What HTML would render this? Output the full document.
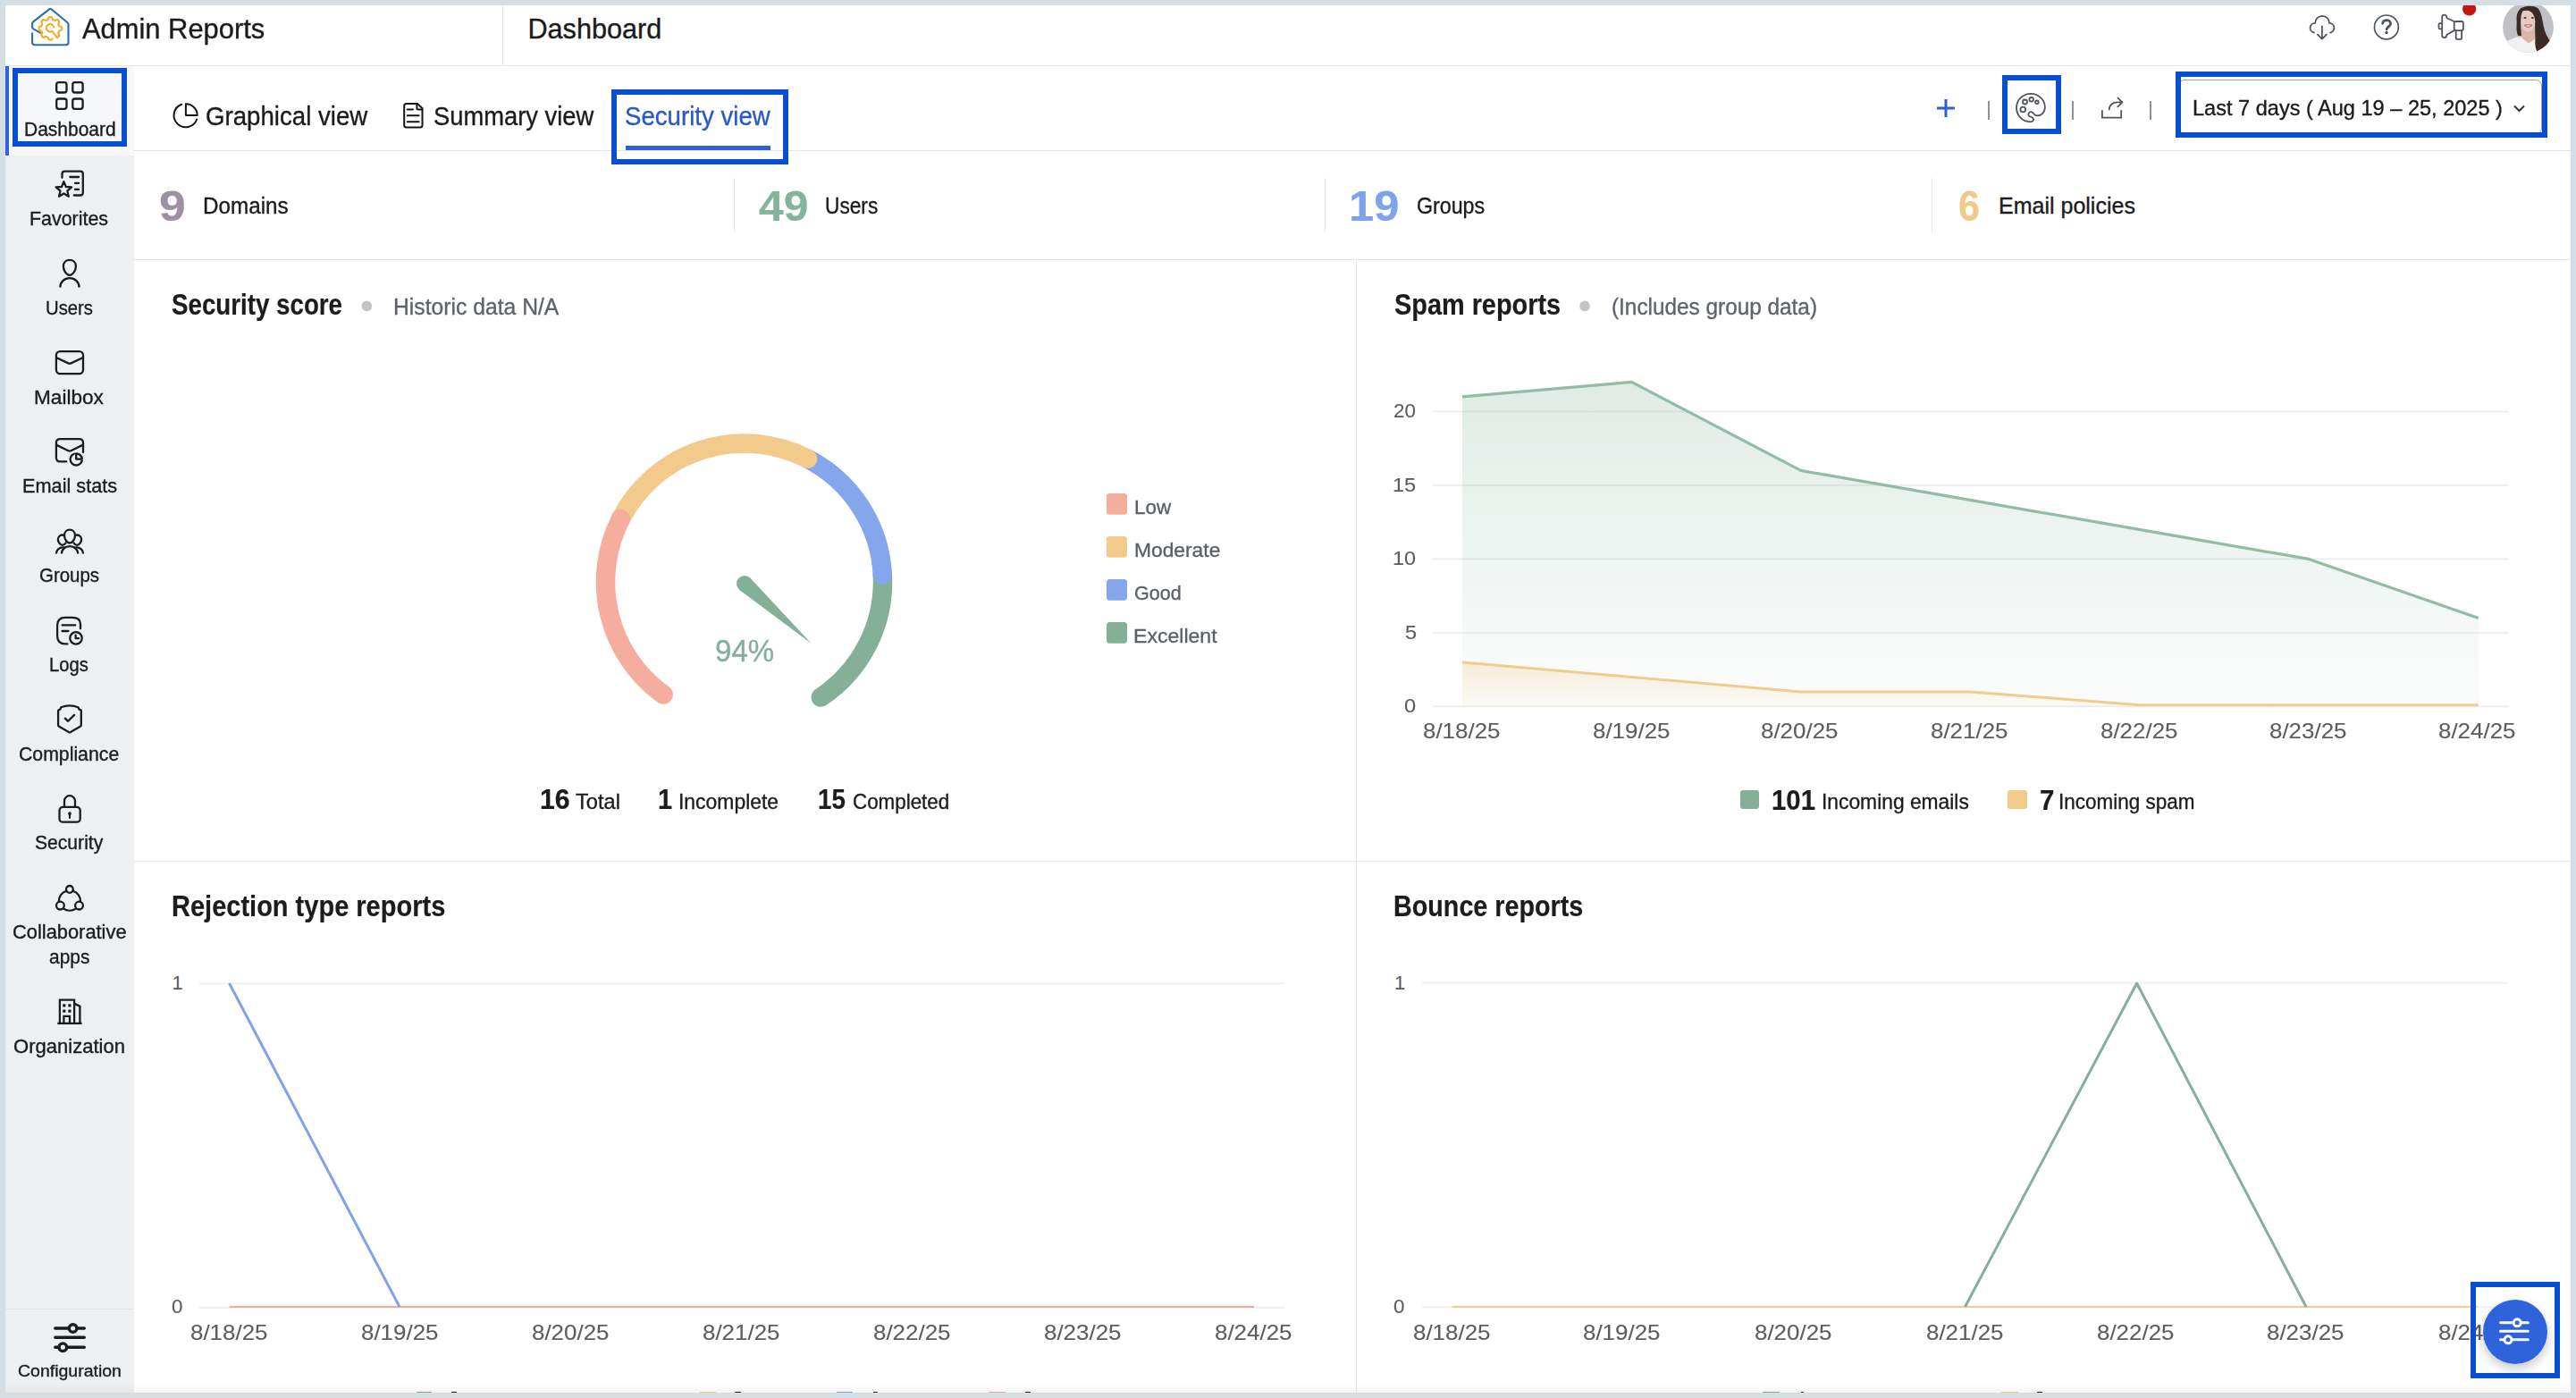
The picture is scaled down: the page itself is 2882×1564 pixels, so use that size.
<!DOCTYPE html>
<html><head><meta charset="utf-8"><title>Admin Reports</title>
<style>
html,body{margin:0;padding:0}
body{width:2882px;height:1564px;position:relative;overflow:hidden;background:#d6dee5;font-family:"Liberation Sans",sans-serif}
.t{position:absolute;white-space:pre;transform-origin:0 0}
.b{position:absolute}
.ann{position:absolute;border:6px solid #0650d0;box-sizing:border-box}
svg{position:absolute;left:0;top:0}
</style></head><body>
<div class="b" style="left:6px;top:6px;width:2870px;height:1552px;background:#fff"></div>
<div class="b" style="left:6px;top:73px;width:2870px;height:1px;background:#e3e5e8"></div>
<div class="b" style="left:562px;top:6px;width:1px;height:67px;background:#e6e8eb"></div>
<div class="b" style="left:6px;top:74px;width:144px;height:1484px;background:#eeeff1"></div>
<div class="b" style="left:10px;top:74px;width:140px;height:100px;background:#f6f7f9"></div>
<div class="b" style="left:6px;top:74px;width:4px;height:100px;background:#2f62dc"></div>
<div class="b" style="left:6px;top:1464px;width:144px;height:1px;background:#e1e3e6"></div>
<div class="b" style="left:150px;top:168px;width:2726px;height:1px;background:#e3e5e8"></div>
<div class="b" style="left:150px;top:290px;width:2726px;height:1px;background:#e6e8eb"></div>
<div class="b" style="left:150px;top:963px;width:2726px;height:1px;background:#e6e8eb"></div>
<div class="b" style="left:1517px;top:291px;width:1px;height:1267px;background:#e6e8eb"></div>
<div class="b" style="left:820.5px;top:199px;width:1px;height:61px;background:#e6e8eb"></div>
<div class="b" style="left:1482px;top:199px;width:1px;height:61px;background:#e6e8eb"></div>
<div class="b" style="left:2160.5px;top:199px;width:1px;height:61px;background:#e6e8eb"></div>
<div class="b" style="left:700px;top:163px;width:162px;height:5px;background:#2e5fd6"></div>
<div class="b" style="left:2224px;top:113px;width:2px;height:21px;background:#8e9196"></div>
<div class="b" style="left:2318px;top:113px;width:2px;height:21px;background:#8e9196"></div>
<div class="b" style="left:2405px;top:113px;width:2px;height:21px;background:#8e9196"></div>
<div class="b" style="left:2437px;top:89px;width:406.5px;height:62px;border:1.5px solid #9da0a5;border-radius:7px;box-sizing:border-box"></div>
<svg width="2882" height="1564" viewBox="0 0 2882 1564">
<defs>
<linearGradient id="gg" x1="0" y1="426" x2="0" y2="790.4" gradientUnits="userSpaceOnUse"><stop offset="0" stop-color="#84b09a" stop-opacity="0.25"/><stop offset="1" stop-color="#84b09a" stop-opacity="0.03"/></linearGradient>
<linearGradient id="gy" x1="0" y1="740" x2="0" y2="790.4" gradientUnits="userSpaceOnUse"><stop offset="0" stop-color="#f2ca8c" stop-opacity="0.28"/><stop offset="1" stop-color="#f2ca8c" stop-opacity="0.05"/></linearGradient>
<filter id="sh" x="-50%" y="-50%" width="200%" height="200%"><feDropShadow dx="0" dy="5" stdDeviation="6" flood-color="#000" flood-opacity="0.22"/></filter>
</defs>
<path d="M987.29 642.89 A155 155 0 0 1 918.28 780.10" stroke="#84b09a" stroke-width="21.5" fill="none" stroke-linecap="round"/><path d="M903.59 513.26 A155 155 0 0 1 987.29 642.89" stroke="#85a6ea" stroke-width="21.5" fill="none" stroke-linecap="round"/><path d="M694.39 580.63 A155 155 0 0 1 903.59 513.26" stroke="#f2ca8c" stroke-width="21.5" fill="none" stroke-linecap="round"/><path d="M742.27 777.03 A155 155 0 0 1 694.39 580.63" stroke="#f5ae9d" stroke-width="21.5" fill="none" stroke-linecap="round"/><circle cx="833" cy="653" r="9" fill="#84b09a"/><path d="M827.00 659.70 L907.8 720 L839.00 646.30Z" fill="#84b09a"/><line x1="1602.8" y1="790.4" x2="2806.7" y2="790.4" stroke="#ededed" stroke-width="1.6"/><line x1="1602.8" y1="707.9" x2="2806.7" y2="707.9" stroke="#ededed" stroke-width="1.6"/><line x1="1602.8" y1="625.4" x2="2806.7" y2="625.4" stroke="#ededed" stroke-width="1.6"/><line x1="1602.8" y1="542.9" x2="2806.7" y2="542.9" stroke="#ededed" stroke-width="1.6"/><line x1="1602.8" y1="460.4" x2="2806.7" y2="460.4" stroke="#ededed" stroke-width="1.6"/>
<polygon points="1636,790.4 1636.0,443.9 1825.4,427.4 2014.7,526.4 2204.0,559.4 2393.4,592.4 2583.0,625.4 2772.9,691.4 2772.9,790.4" fill="url(#gg)"/>
<polygon points="1636,790.4 1636.0,740.9 1825.4,757.4 2014.7,773.9 2204.0,773.9 2393.4,790.4 2583.0,790.4 2772.9,790.4 2772.9,790.4" fill="url(#gy)"/>
<polyline points="1636.0,443.9 1825.4,427.4 2014.7,526.4 2204.0,559.4 2393.4,592.4 2583.0,625.4 2772.9,691.4" fill="none" stroke="#90bda4" stroke-width="3.2" stroke-linejoin="round"/>
<polyline points="1636.0,740.9 1825.4,757.4 2014.7,773.9 2204.0,773.9 2393.4,788.8 2583.0,788.8 2772.9,788.8" fill="none" stroke="#f3cb8f" stroke-width="3" stroke-linejoin="round"/>
<line x1="223" y1="1100.2" x2="1437" y2="1100.2" stroke="#ededed" stroke-width="1.6"/>
<line x1="223" y1="1462.9" x2="1437" y2="1462.9" stroke="#ededed" stroke-width="1.6"/>
<line x1="256.7" y1="1462" x2="1403" y2="1462" stroke="#f3ab98" stroke-width="2.2"/>
<polyline points="256.5,1100 447,1462" fill="none" stroke="#7fa3e9" stroke-width="3"/><line x1="1591" y1="1099.8" x2="2806" y2="1099.8" stroke="#ededed" stroke-width="1.6"/>
<line x1="1591" y1="1462.5" x2="2806" y2="1462.5" stroke="#ededed" stroke-width="1.6"/>
<line x1="1624.5" y1="1462" x2="2771.5" y2="1462" stroke="#f3cb8f" stroke-width="2.2"/>
<polyline points="2198.5,1462 2390.6,1100 2580,1462" fill="none" stroke="#84b09a" stroke-width="3" stroke-linejoin="round"/>
<g stroke="#1b1c1e" stroke-width="2.3" fill="none" stroke-linecap="round" stroke-linejoin="round">
 <rect x="63.2" y="92.2" width="11.3" height="11.3" rx="2.5"/><rect x="81.3" y="92.2" width="11.3" height="11.3" rx="2.5"/>
 <rect x="63.2" y="110.5" width="11.3" height="11.3" rx="2.5"/><rect x="81.3" y="110.5" width="11.3" height="11.3" rx="2.5"/>
 <path d="M69.5 198.8V194.6Q69.5 191.6 72.5 191.6H89.8Q92.8 191.6 92.8 194.6V215.5Q92.8 218.5 89.8 218.5H82.8"/>
 <path d="M78.4 198H88.1M84 204.9H88.1M84 211.9H88.1"/>
 <path d="M71.40,203.10 L68.99,208.98 L62.65,209.46 L67.50,213.57 L65.99,219.74 L71.40,216.40 L76.81,219.74 L75.30,213.57 L80.15,209.46 L73.81,208.98Z"/>
 <path d="M77.9 290.9C82 290.9 84.9 293.9 84.9 298C84.9 302.6 81.4 307.8 77.9 307.8C74.4 307.8 70.9 302.6 70.9 298C70.9 293.9 73.8 290.9 77.9 290.9Z"/>
 <path d="M67.3 321.5C67.3 315.6 72 311.2 77.9 311.2C83.8 311.2 88.6 315.6 88.6 321.5" stroke-linecap="butt"/>
 <rect x="62.9" y="393.1" width="30.1" height="25.1" rx="4.4"/>
 <path d="M63.4 400.2L76.4 406.4Q77.9 407.1 79.4 406.4L92.5 400.2"/>
 <path d="M74.3 516.4H67.3Q62.9 516.4 62.9 512V495.5Q62.9 491.1 67.3 491.1H88.6Q93 491.1 93 495.5V506"/>
 <path d="M63.4 497.9L76.4 504.2Q77.9 504.9 79.4 504.2L92.5 497.9"/>
 <path d="M82.9 507.7A6.6 6.6 0 1 0 91.7 515.3"/>
 <path d="M85.2 507.3V513.6H91.8A6.6 6.6 0 0 0 85.2 507.3Z"/>
 <path d="M78 592.6C81.6 592.6 84 595.3 84 599C84 603 81 607.5 78 607.5C75 607.5 72 603 72 599C72 595.3 74.4 592.6 78 592.6Z"/>
 <path d="M68.9 619.6C68.9 614.6 72.8 611.2 78 611.2C83.2 611.2 87.2 614.6 87.2 619.6" stroke-linecap="butt"/>
 <path d="M71.8 598.9C71.3 598.6 70.6 598.5 69.9 598.5C67 598.5 64.9 600.8 64.9 603.6C64.9 606.6 67.3 609.8 69.9 609.8C71.3 609.8 72.6 608.8 73.5 607.4"/>
 <path d="M84.2 598.9C84.7 598.6 85.4 598.5 86.1 598.5C89 598.5 91.1 600.8 91.1 603.6C91.1 606.6 88.7 609.8 86.1 609.8C84.7 609.8 83.4 608.8 82.5 607.4"/>
 <path d="M62.9 619.6C62.9 615.5 66.3 612.3 70.5 612.3C71.3 612.3 72.1 612.4 72.8 612.6M93.1 619.6C93.1 615.5 89.7 612.3 85.5 612.3C84.7 612.3 83.9 612.4 83.2 612.6" stroke-linecap="butt"/>
 <path d="M90 703.2V698Q89.8 690.8 81 690.8H73Q64.2 690.8 64.1 699.5V711.5Q64.2 720.3 73 720.4H75.4"/>
 <path d="M69.6 699.4H84.2M69.6 706H76.4"/>
 <circle cx="85" cy="713.9" r="6.7"/>
 <path d="M84.6 710.6V714.2H88"/>
 <path d="M68.3 791.3Q77.9 787.6 87.4 791.3L88.4 793.4L90.8 794.6V811.2Q90.8 812.3 89.8 812.8L78.9 819.1Q77.9 819.6 76.9 819.1L66.1 812.8Q65.1 812.3 65.1 811.2V794.7L67.4 793.4Z"/>
 <path d="M72.8 803.7L76.1 806.8L83.1 799.9"/>
 <rect x="66.5" y="902.9" width="23.2" height="16.8" rx="3.8"/>
 <path d="M72 902.6V896.2A6 6 0 0 1 84 896.2V902.6"/>
 <path d="M78 910.5V915" stroke-width="2.1"/>
 <circle cx="78" cy="910.1" r="1.9" fill="#1b1c1e" stroke="none"/>
 <circle cx="77.9" cy="994.9" r="3.9"/><circle cx="67.4" cy="1013.1" r="4.4"/><circle cx="88.5" cy="1013.1" r="4.4"/>
 <path d="M74.5 996.6A12 12 0 0 0 65.9 1008.8M70.9 1016.4A12 12 0 0 0 85 1016.4M90 1008.8A12 12 0 0 0 81.3 996.6"/>
 <path d="M64.3 1144.9H91.6" stroke-linecap="butt"/>
 <path d="M66.9 1144.9V1118.6H83.1V1144.9M83.1 1122.6L89.4 1125.8V1144.9M71.4 1144.9V1136.8H78V1144.9" stroke-linejoin="miter" stroke-linecap="butt"/>
</g>
<g fill="#1b1c1e">
 <rect x="70.2" y="1123.3" width="3.2" height="3.2" rx="0.6"/><rect x="76.3" y="1123.3" width="3.2" height="3.2" rx="0.6"/>
 <rect x="70.2" y="1129.5" width="3.2" height="3.2" rx="0.6"/><rect x="76.3" y="1129.5" width="3.2" height="3.2" rx="0.6"/>
</g>
<g stroke="#1b1c1e" stroke-width="3.4" fill="none" stroke-linecap="round">
 <path d="M61.8 1486H77.3M86 1486H94.3M61.8 1496.3H94.3M61.8 1507.2H66M74.6 1507.2H94.3"/>
 <circle cx="81.6" cy="1486" r="4.3"/><circle cx="70.3" cy="1507.2" r="4.3"/>
</g>

<g stroke="#50555c" stroke-width="1.8" fill="none" stroke-linecap="round" stroke-linejoin="round">
 <path d="M2589 36.6A5.45 5.45 0 0 1 2590.2 25.8A7.9 7.9 0 0 1 2606 25.8A5.45 5.45 0 0 1 2607 36.6"/>
 <path d="M2597.9 29.3V43.3M2592.9 38.6L2597.9 43.6L2602.9 38.6"/>
 <circle cx="2669.9" cy="30.4" r="13.4" stroke-width="1.7"/>
 <path d="M2665.6 26.3C2665.9 23.8 2667.8 22.6 2670.2 22.6C2672.8 22.6 2674.6 24.2 2674.6 26.4C2674.6 29.3 2670.1 30.3 2670.1 32.9" stroke-width="2.7"/>
 <path d="M2745.7 24L2738.6 20.7Q2737.2 20 2737.2 18.9Q2737 16.6 2734.6 16.6Q2732.2 16.6 2732.2 19V39.8Q2732.2 42.2 2734.6 42.2Q2737 42.2 2737.2 39.9Q2737.2 38.8 2738.6 38.2L2745.7 34.1"/>
 <rect x="2745.7" y="24" width="10.2" height="10.1" rx="2"/>
 <path d="M2732.2 26.2H2729.8Q2728.5 26.2 2728.5 27.5V31Q2728.5 32.3 2729.8 32.3H2732.2"/>
 <path d="M2747.7 34.1V42.2Q2747.7 43.9 2749.4 43.9H2752.4Q2754.1 43.9 2754.1 42.2V34.1"/>
</g>
<circle cx="2670" cy="36.6" r="1.75" fill="#50555c"/>
<circle cx="2762.6" cy="9.9" r="7.6" fill="#c11717"/>
<g stroke="#50555c" stroke-width="1.8" fill="none" stroke-linecap="round" stroke-linejoin="round" stroke-width="1.5">
 <path d="M2271.6 136.3C2262.6 136.3 2256 129.2 2256 120.5C2256 111.9 2263 104.9 2272 104.9C2281 104.9 2287.9 111.8 2287.9 120C2287.9 125.6 2284 129.4 2279.2 129.4C2276.7 129.4 2275.6 127.8 2274.7 126.6C2273.7 125.3 2271.9 124.9 2270.5 125.8C2269 126.8 2269 129 2270.3 129.9C2271.3 130.6 2273.5 130.8 2274.6 132.4C2275.6 134.1 2274.3 136.3 2271.6 136.3Z"/>
 <circle cx="2265.5" cy="114" r="2.5"/><circle cx="2272.7" cy="111.3" r="2.3"/><circle cx="2278.9" cy="114.3" r="1.8"/><circle cx="2263.3" cy="122.5" r="2.9"/>
</g>
<g stroke="#50555c" stroke-width="1.8" fill="none" stroke-linecap="round" stroke-linejoin="round">
 <path d="M2351.9 123.3V131.6H2373.2V123.3" stroke-linecap="butt" stroke-linejoin="miter"/>
 <path d="M2359.8 122.6C2359.8 117.5 2364 114.3 2369 114.3H2374"/>
 <path d="M2369.4 109.6L2374.4 114.3L2369.4 119.4"/>
</g>
<g stroke="#151515" stroke-width="2" fill="none" stroke-linecap="round" stroke-linejoin="round">
 <path d="M203.1 116.7A13.2 13.2 0 1 0 220.2 133.5"/>
 <path d="M207.9 116.2V129H220.7A12.8 12.8 0 0 0 207.9 116.2Z"/>
 <path d="M452.2 118.6Q452.2 116.1 454.7 116.1H467.3L472.5 121.3V140.1Q472.5 142.6 470 142.6H454.7Q452.2 142.6 452.2 140.1Z"/>
 <path d="M466.4 116.4V121Q466.4 122.5 468 122.5H472.3"/>
 <path d="M455.7 122.4H462M455.7 129.3H468.6M455.7 136.2H468.6"/>
</g>

<g stroke="#2a6cb6" stroke-width="2.1" fill="none" stroke-linecap="round" stroke-linejoin="round">
 <path d="M36.1 37.3V47.6Q36.1 50.3 38.9 50.3H73.8Q76.5 50.3 76.5 47.6V27.2Q76.5 26 75.5 25.2L57.5 10.3Q56.3 9.4 55.1 10.3L37.1 24.4Q36.1 25.2 36.1 26.4V30.6Q36.1 31.6 37 32.1L45 36.6"/>
</g>
<g stroke="#f5a91d" stroke-width="2" fill="none" stroke-linecap="round" stroke-linejoin="round">
 <path d="M58.50,43.22 L58.43,43.38 L58.37,43.54 L58.30,43.69 L58.22,43.85 L58.15,44.00 L58.07,44.15 L57.99,44.29 L57.90,44.43 L57.81,44.51 L57.70,44.52 L57.60,44.53 L57.50,44.54 L57.40,44.55 L57.29,44.56 L57.19,44.57 L57.09,44.58 L56.98,44.58 L56.88,44.59 L56.78,44.59 L56.68,44.59 L56.57,44.60 L56.47,44.60 L56.37,44.60 L56.26,44.60 L56.16,44.60 L56.06,44.60 L55.95,44.60 L55.85,44.59 L55.75,44.59 L55.64,44.58 L55.54,44.58 L55.44,44.57 L55.34,44.56 L55.23,44.56 L55.13,44.55 L55.03,44.54 L54.93,44.53 L54.82,44.51 L54.72,44.47 L54.64,44.33 L54.56,44.19 L54.48,44.04 L54.40,43.89 L54.32,43.74 L54.25,43.58 L54.18,43.42 L54.12,43.26 L54.06,43.10 L53.99,42.94 L53.94,42.78 L53.88,42.62 L53.82,42.46 L53.77,42.30 L53.72,42.15 L53.67,42.00 L53.62,41.86 L53.57,41.73 L53.49,41.71 L53.41,41.68 L53.33,41.66 L53.25,41.63 L53.17,41.61 L53.10,41.58 L53.02,41.56 L52.94,41.53 L52.86,41.50 L52.78,41.47 L52.70,41.45 L52.63,41.42 L52.55,41.39 L52.47,41.35 L52.40,41.32 L52.32,41.29 L52.24,41.26 L52.17,41.23 L52.09,41.19 L52.02,41.16 L51.94,41.12 L51.87,41.09 L51.79,41.05 L51.72,41.01 L51.65,40.98 L51.57,40.94 L51.50,40.90 L51.43,40.86 L51.35,40.82 L51.28,40.78 L51.15,40.83 L51.02,40.90 L50.88,40.97 L50.73,41.04 L50.58,41.12 L50.43,41.19 L50.28,41.26 L50.12,41.34 L49.97,41.41 L49.81,41.48 L49.65,41.54 L49.49,41.61 L49.33,41.67 L49.16,41.72 L49.00,41.78 L48.84,41.82 L48.68,41.87 L48.53,41.90 L48.43,41.86 L48.34,41.80 L48.26,41.73 L48.19,41.67 L48.11,41.60 L48.03,41.54 L47.95,41.47 L47.87,41.40 L47.80,41.33 L47.72,41.26 L47.64,41.19 L47.57,41.12 L47.49,41.05 L47.42,40.98 L47.35,40.91 L47.27,40.83 L47.20,40.76 L47.13,40.69 L47.06,40.61 L46.99,40.54 L46.92,40.46 L46.85,40.38 L46.78,40.31 L46.71,40.23 L46.64,40.15 L46.58,40.07 L46.51,39.99 L46.45,39.91 L46.38,39.83 L46.32,39.75 L46.31,39.63 L46.34,39.47 L46.39,39.31 L46.44,39.15 L46.49,38.99 L46.55,38.83 L46.61,38.67 L46.67,38.51 L46.74,38.35 L46.81,38.19 L46.88,38.03 L46.96,37.88 L47.03,37.72 L47.10,37.57 L47.18,37.43 L47.25,37.28 L47.32,37.14 L47.39,37.01 L47.41,36.90 L47.37,36.83 L47.33,36.75 L47.29,36.68 L47.25,36.61 L47.21,36.53 L47.18,36.46 L47.14,36.39 L47.10,36.31 L47.07,36.24 L47.03,36.16 L47.00,36.09 L46.96,36.01 L46.93,35.93 L46.90,35.86 L46.87,35.78 L46.84,35.70 L46.81,35.63 L46.78,35.55 L46.75,35.47 L46.72,35.40 L46.69,35.32 L46.66,35.24 L46.64,35.16 L46.61,35.08 L46.58,35.00 L46.56,34.92 L46.53,34.85 L46.51,34.77 L46.49,34.69 L46.45,34.61 L46.30,34.56 L46.16,34.52 L46.01,34.47 L45.85,34.41 L45.70,34.36 L45.54,34.31 L45.38,34.25 L45.21,34.19 L45.05,34.13 L44.89,34.06 L44.73,34.00 L44.57,33.93 L44.42,33.85 L44.26,33.78 L44.11,33.70 L43.97,33.62 L43.83,33.54 L43.70,33.45 L43.68,33.35 L43.67,33.25 L43.66,33.14 L43.65,33.04 L43.64,32.94 L43.63,32.84 L43.63,32.73 L43.62,32.63 L43.62,32.53 L43.61,32.42 L43.61,32.32 L43.60,32.22 L43.60,32.11 L43.60,32.01 L43.60,31.91 L43.60,31.80 L43.60,31.70 L43.60,31.60 L43.61,31.50 L43.61,31.39 L43.61,31.29 L43.62,31.19 L43.63,31.08 L43.63,30.98 L43.64,30.88 L43.65,30.77 L43.66,30.67 L43.67,30.57 L43.68,30.47 L43.69,30.36 L43.81,30.28 L43.95,30.19 L44.09,30.11 L44.24,30.03 L44.39,29.96 L44.55,29.88 L44.71,29.81 L44.87,29.75 L45.03,29.68 L45.19,29.62 L45.35,29.56 L45.51,29.50 L45.67,29.45 L45.83,29.39 L45.98,29.34 L46.13,29.29 L46.28,29.24 L46.42,29.19 L46.48,29.13 L46.51,29.05 L46.53,28.97 L46.56,28.89 L46.58,28.81 L46.61,28.73 L46.63,28.65 L46.66,28.57 L46.69,28.49 L46.71,28.42 L46.74,28.34 L46.77,28.26 L46.80,28.18 L46.83,28.11 L46.86,28.03 L46.89,27.95 L46.93,27.88 L46.96,27.80 L46.99,27.73 L47.03,27.65 L47.06,27.57 L47.10,27.50 L47.13,27.43 L47.17,27.35 L47.21,27.28 L47.25,27.20 L47.28,27.13 L47.32,27.06 L47.36,26.98 L47.40,26.91 L47.40,26.81 L47.33,26.68 L47.26,26.54 L47.19,26.39 L47.11,26.25 L47.04,26.10 L46.97,25.95 L46.89,25.79 L46.82,25.64 L46.75,25.48 L46.68,25.32 L46.62,25.16 L46.56,25.00 L46.50,24.83 L46.44,24.67 L46.40,24.51 L46.35,24.35 L46.31,24.19 L46.31,24.06 L46.37,23.98 L46.44,23.90 L46.50,23.82 L46.57,23.74 L46.63,23.66 L46.70,23.58 L46.77,23.51 L46.84,23.43 L46.91,23.35 L46.98,23.28 L47.05,23.20 L47.12,23.13 L47.19,23.05 L47.26,22.98 L47.33,22.90 L47.41,22.83 L47.48,22.76 L47.56,22.69 L47.63,22.62 L47.71,22.55 L47.78,22.48 L47.86,22.41 L47.94,22.34 L48.02,22.27 L48.09,22.21 L48.17,22.14 L48.25,22.07 L48.33,22.01 L48.41,21.95 L48.50,21.89 L48.66,21.93 L48.82,21.97 L48.98,22.02 L49.14,22.07 L49.30,22.12 L49.46,22.18 L49.62,22.25 L49.78,22.31 L49.94,22.38 L50.10,22.45 L50.26,22.52 L50.41,22.60 L50.56,22.67 L50.71,22.74 L50.85,22.82 L51.00,22.89 L51.13,22.96 L51.27,23.02 L51.34,22.99 L51.41,22.95 L51.49,22.91 L51.56,22.87 L51.63,22.83 L51.71,22.79 L51.78,22.76 L51.86,22.72 L51.93,22.68 L52.01,22.65 L52.08,22.61 L52.16,22.58 L52.23,22.55 L52.31,22.51 L52.39,22.48 L52.46,22.45 L52.54,22.42 L52.62,22.39 L52.69,22.36 L52.77,22.33 L52.85,22.30 L52.93,22.27 L53.00,22.25 L53.08,22.22 L53.16,22.19 L53.24,22.17 L53.32,22.14 L53.40,22.12 L53.48,22.10 L53.56,22.08 L53.61,21.97 L53.66,21.82 L53.71,21.67 L53.76,21.52 L53.82,21.36 L53.87,21.21 L53.93,21.05 L53.99,20.88 L54.05,20.72 L54.11,20.56 L54.17,20.40 L54.24,20.24 L54.31,20.08 L54.39,19.93 L54.46,19.78 L54.54,19.63 L54.63,19.49 L54.71,19.35 L54.81,19.29 L54.91,19.28 L55.01,19.27 L55.11,19.26 L55.22,19.25 L55.32,19.24 L55.42,19.23 L55.53,19.22 L55.63,19.22 L55.73,19.21 L55.84,19.21 L55.94,19.21 L56.04,19.20 L56.14,19.20 L56.25,19.20 L56.35,19.20 L56.45,19.20 L56.56,19.20 L56.66,19.21 L56.76,19.21 L56.87,19.21 L56.97,19.22 L57.07,19.22 L57.18,19.23 L57.28,19.24 L57.38,19.25 L57.48,19.26 L57.59,19.27 L57.69,19.28 L57.79,19.29 L57.89,19.35 L57.97,19.48 L58.06,19.63 L58.13,19.78 L58.21,19.93 L58.29,20.08 L58.36,20.24 L58.42,20.40 L58.49,20.56 L58.55,20.72 L58.61,20.88 L58.67,21.04 L58.73,21.20 L58.78,21.36 L58.84,21.52 L58.89,21.67 L58.94,21.82 L58.98,21.96 L59.04,22.07 L59.12,22.10 L59.20,22.12 L59.28,22.14 L59.36,22.17 L59.44,22.19 L59.52,22.22 L59.59,22.25 L59.67,22.27 L59.75,22.30 L59.83,22.33 L59.91,22.36 L59.98,22.39 L60.06,22.42 L60.14,22.45 L60.21,22.48 L60.29,22.51 L60.37,22.55 L60.44,22.58 L60.52,22.61 L60.59,22.65 L60.67,22.68 L60.74,22.72 L60.82,22.75 L60.89,22.79 L60.96,22.83 L61.04,22.87 L61.11,22.91 L61.18,22.95 L61.26,22.99 L61.33,23.02 L61.46,22.96 L61.60,22.89 L61.74,22.82 L61.89,22.75 L62.04,22.67 L62.19,22.60 L62.34,22.53 L62.50,22.45 L62.65,22.38 L62.81,22.31 L62.97,22.25 L63.13,22.18 L63.30,22.12 L63.46,22.07 L63.62,22.02 L63.78,21.97 L63.94,21.93 L64.10,21.89 L64.19,21.94 L64.27,22.01 L64.35,22.07 L64.43,22.14 L64.50,22.21 L64.58,22.27 L64.66,22.34 L64.74,22.41 L64.82,22.48 L64.89,22.55 L64.97,22.62 L65.04,22.69 L65.12,22.76 L65.19,22.83 L65.26,22.90 L65.34,22.98 L65.41,23.05 L65.48,23.12 L65.55,23.20 L65.62,23.27 L65.69,23.35 L65.76,23.43 L65.83,23.50 L65.90,23.58 L65.96,23.66 L66.03,23.74 L66.10,23.82 L66.16,23.90 L66.23,23.98 L66.29,24.06 L66.29,24.19 L66.25,24.35 L66.21,24.51 L66.16,24.67 L66.10,24.83 L66.04,24.99 L65.98,25.15 L65.92,25.31 L65.85,25.47 L65.78,25.63 L65.71,25.79 L65.63,25.94 L65.56,26.10 L65.49,26.25 L65.41,26.39 L65.34,26.53 L65.27,26.67 L65.21,26.81 L65.20,26.91 L65.24,26.98 L65.28,27.06 L65.32,27.13 L65.35,27.20 L65.39,27.28 L65.43,27.35 L65.47,27.42 L65.50,27.50 L65.54,27.57 L65.57,27.65 L65.61,27.72 L65.64,27.80 L65.67,27.88 L65.71,27.95 L65.74,28.03 L65.77,28.11 L65.80,28.18 L65.83,28.26 L65.86,28.34 L65.89,28.41 L65.91,28.49 L65.94,28.57 L65.97,28.65 L65.99,28.73 L66.02,28.81 L66.04,28.89 L66.07,28.97 L66.09,29.04 L66.12,29.12 L66.17,29.19 L66.32,29.24 L66.46,29.29 L66.61,29.34 L66.77,29.39 L66.93,29.45 L67.09,29.50 L67.25,29.56 L67.41,29.62 L67.57,29.68 L67.73,29.75 L67.89,29.81 L68.05,29.88 L68.20,29.96 L68.36,30.03 L68.51,30.11 L68.65,30.19 L68.79,30.27 L68.91,30.36 L68.92,30.47 L68.93,30.57 L68.94,30.67 L68.95,30.77 L68.96,30.88 L68.97,30.98 L68.97,31.08 L68.98,31.18 L68.99,31.29 L68.99,31.39 L68.99,31.49 L69.00,31.60 L69.00,31.70 L69.00,31.80 L69.00,31.91 L69.00,32.01 L69.00,32.11 L69.00,32.22 L68.99,32.32 L68.99,32.42 L68.98,32.52 L68.98,32.63 L68.97,32.73 L68.97,32.83 L68.96,32.94 L68.95,33.04 L68.94,33.14 L68.93,33.24 L68.92,33.35 L68.91,33.45 L68.78,33.54 L68.63,33.62 L68.49,33.70 L68.34,33.78 L68.19,33.85 L68.03,33.93 L67.87,34.00 L67.71,34.06 L67.55,34.13 L67.39,34.19 L67.23,34.25 L67.07,34.30 L66.91,34.36 L66.75,34.41 L66.60,34.46 L66.45,34.51 L66.30,34.56 L66.16,34.61 L66.11,34.69 L66.09,34.76 L66.07,34.84 L66.04,34.92 L66.02,35.00 L65.99,35.08 L65.97,35.16 L65.94,35.24 L65.91,35.32 L65.88,35.39 L65.85,35.47 L65.82,35.55 L65.79,35.63 L65.76,35.70 L65.73,35.78 L65.70,35.86 L65.67,35.93 L65.64,36.01 L65.60,36.08 L65.57,36.16 L65.53,36.24 L65.50,36.31 L65.46,36.38 L65.42,36.46 L65.39,36.53 L65.35,36.61 L65.31,36.68 L65.27,36.75 L65.23,36.83 L65.19,36.90 L65.21,37.01 L65.28,37.14 L65.35,37.28 L65.42,37.43 L65.50,37.57 L65.57,37.72 L65.64,37.87 L65.72,38.03 L65.79,38.19 L65.86,38.34 L65.92,38.50 L65.99,38.67 L66.05,38.83 L66.11,38.99 L66.16,39.15 L66.21,39.31 L66.26,39.47 L66.29,39.63 L66.28,39.75 L66.22,39.83 L66.15,39.91 L66.09,39.99 L66.02,40.07 L65.96,40.15 L65.89,40.23 L65.82,40.30 L65.75,40.38 L65.68,40.46 L65.61,40.53 L65.54,40.61 L65.47,40.68 L65.40,40.76 L65.33,40.83 L65.26,40.91 L65.18,40.98 L65.11,41.05 L65.03,41.12 L64.96,41.19 L64.88,41.26 L64.81,41.33 L64.73,41.40 L64.65,41.47 L64.57,41.54 L64.50,41.60 L64.42,41.67 L64.34,41.73 L64.26,41.80 L64.18,41.86 L64.08,41.90 L63.92,41.87 L63.76,41.83 L63.60,41.78 L63.44,41.73"/>
 <path d="M60.3 30.7A4.2 4.2 0 1 0 58.4 34.8L63.6 41.9"/>
</g>
<g>
<clipPath id="avc"><circle cx="2828.5" cy="30.4" r="28.4"/></clipPath>
<g clip-path="url(#avc)">
 <rect x="2798" y="0" width="62" height="62" fill="#c0c1c5"/>
 <path d="M2800 48L2815 41.5L2822 41.5L2829 47.5L2836 44L2841 50L2839 62L2800 62Z" fill="#f2f1f1"/>
 <path d="M2821.5 33L2834.8 33L2835.6 44L2829 48.5L2821.8 43Z" fill="#dcb5a9"/>
 <ellipse cx="2828.4" cy="23.2" rx="8.4" ry="12.6" fill="#e6cac1"/>
 <path d="M2821.8 8.5C2816.8 11 2815.2 16.5 2815.6 22.5C2815.9 28.5 2814.6 34 2817.2 39.8L2821 40.3C2820.4 34 2819.8 26 2820.4 19.5C2820.6 15 2822 12 2824 10.5Z" fill="#3b2925"/>
 <path d="M2818.5 11.5C2821.5 6.5 2833.5 5 2839 9C2843.5 13 2844.3 22 2845.6 29C2847 36 2850 42 2853.5 46.5C2850.5 52 2844.5 56.5 2839 58.5C2836.2 54 2836 48 2836.5 43.5C2836.2 37.5 2836 30 2836.3 24C2836 17 2832.5 12.5 2828.2 11.8C2824.2 11.3 2820.8 13 2818.5 11.5Z" fill="#3b2925"/>
 <ellipse cx="2825" cy="19.9" rx="1.5" ry="0.9" fill="#3a2626"/><ellipse cx="2833.4" cy="19.9" rx="1.5" ry="0.9" fill="#3a2626"/>
 <path d="M2824.2 28.2Q2828.5 27.4 2832.8 28.2Q2828.5 32.4 2824.2 28.2Z" fill="#f4e9e6" stroke="#b04850" stroke-width="0.9"/>
</g></g>
<g fill="#f5ae9d"><rect x="1238" y="552" width="23" height="23.8" rx="3.5"/></g>
<rect x="1238" y="600" width="23" height="23.8" rx="3.5" fill="#f2ca8c"/>
<rect x="1238" y="648" width="23" height="23.8" rx="3.5" fill="#85a6ea"/>
<rect x="1238" y="696" width="23" height="23.8" rx="3.5" fill="#84b09a"/>
<rect x="1947" y="884" width="21" height="21" rx="3" fill="#84b09a"/>
<rect x="2246" y="884" width="22" height="21" rx="3" fill="#f2ca8c"/>
<circle cx="410.4" cy="342.4" r="5.8" fill="#c3c3c3"/>
<circle cx="1773" cy="342.4" r="5.8" fill="#c3c3c3"/>
<path d="M2177 111v20M2167 121h20" stroke="#2e5fd0" stroke-width="3"/>
<path d="M2813 118.5l5.5 5.5l5.5-5.5" stroke="#333" stroke-width="2" fill="none"/>
</svg>
<div class="t" style="left:91.71px;top:16.75px;font-size:30.65px;line-height:30.65px;color:#1b1b1b;-webkit-text-stroke:0.35px #1b1b1b;transform:scaleX(1.0079);">Admin Reports</div>
<div class="t" style="left:590.42px;top:16.75px;font-size:30.65px;line-height:30.65px;color:#1b1b1b;-webkit-text-stroke:0.35px #1b1b1b;">Dashboard</div>
<div class="t" style="left:230.45px;top:115.31px;font-size:29.52px;line-height:29.52px;color:#1b1b1b;-webkit-text-stroke:0.35px #1b1b1b;transform:scaleX(0.9363);">Graphical view</div>
<div class="t" style="left:484.79px;top:115.31px;font-size:29.52px;line-height:29.52px;color:#1b1b1b;-webkit-text-stroke:0.35px #1b1b1b;transform:scaleX(0.9264);">Summary view</div>
<div class="t" style="left:698.70px;top:115.31px;font-size:29.52px;line-height:29.52px;color:#2a58c9;-webkit-text-stroke:0.35px #2a58c9;transform:scaleX(0.9361);">Security view</div>
<div class="t" style="left:2453.19px;top:109.49px;font-size:23.9px;line-height:23.9px;color:#1b1b1b;-webkit-text-stroke:0.35px #1b1b1b;transform:scaleX(0.9857);">Last 7 days ( Aug 19 – 25, 2025 )</div>
<div class="t" style="left:177.72px;top:205.54px;font-size:48.78px;line-height:48.78px;color:#9e90a3;font-weight:700;-webkit-text-stroke:0.2px #9e90a3;transform:scaleX(1.0964);">9</div>
<div class="t" style="left:227.08px;top:217.53px;font-size:25.02px;line-height:25.02px;color:#1b1b1b;-webkit-text-stroke:0.35px #1b1b1b;transform:scaleX(0.9693);">Domains</div>
<div class="t" style="left:849.47px;top:205.54px;font-size:48.78px;line-height:48.78px;color:#84b49a;font-weight:700;-webkit-text-stroke:0.2px #84b49a;transform:scaleX(1.0210);">49</div>
<div class="t" style="left:923.30px;top:217.53px;font-size:25.02px;line-height:25.02px;color:#1b1b1b;-webkit-text-stroke:0.35px #1b1b1b;transform:scaleX(0.9066);">Users</div>
<div class="t" style="left:1509.33px;top:205.54px;font-size:48.78px;line-height:48.78px;color:#7fa3e9;font-weight:700;-webkit-text-stroke:0.2px #7fa3e9;transform:scaleX(1.0411);">19</div>
<div class="t" style="left:1585.38px;top:217.53px;font-size:25.02px;line-height:25.02px;color:#1b1b1b;-webkit-text-stroke:0.35px #1b1b1b;transform:scaleX(0.9282);">Groups</div>
<div class="t" style="left:2191.00px;top:205.54px;font-size:48.78px;line-height:48.78px;color:#f1c98b;font-weight:700;-webkit-text-stroke:0.2px #f1c98b;transform:scaleX(0.8848);">6</div>
<div class="t" style="left:2235.99px;top:217.53px;font-size:25.02px;line-height:25.02px;color:#1b1b1b;-webkit-text-stroke:0.35px #1b1b1b;">Email policies</div>
<div class="t" style="left:192.08px;top:324.07px;font-size:33.57px;line-height:33.57px;color:#1b1c1e;font-weight:700;-webkit-text-stroke:0.2px #1b1c1e;transform:scaleX(0.8257);">Security score</div>
<div class="t" style="left:439.70px;top:330.51px;font-size:25.16px;line-height:25.16px;color:#5e636b;-webkit-text-stroke:0.35px #5e636b;transform:scaleX(0.9818);">Historic data N/A</div>
<div class="t" style="left:1268.74px;top:555.63px;font-size:22.91px;line-height:22.91px;color:#5b6069;-webkit-text-stroke:0.35px #5b6069;transform:scaleX(0.9799);">Low</div>
<div class="t" style="left:1268.74px;top:603.63px;font-size:22.91px;line-height:22.91px;color:#5b6069;-webkit-text-stroke:0.35px #5b6069;transform:scaleX(0.9953);">Moderate</div>
<div class="t" style="left:1269.38px;top:651.63px;font-size:22.91px;line-height:22.91px;color:#5b6069;-webkit-text-stroke:0.35px #5b6069;transform:scaleX(0.9394);">Good</div>
<div class="t" style="left:1268.44px;top:699.63px;font-size:22.91px;line-height:22.91px;color:#5b6069;-webkit-text-stroke:0.35px #5b6069;transform:scaleX(1.0069);">Excellent</div>
<div class="t" style="left:799.62px;top:711.41px;font-size:34.58px;line-height:34.58px;color:#84b09a;-webkit-text-stroke:0.35px #84b09a;transform:scaleX(0.9565);">94%</div>
<div class="t" style="left:603.73px;top:879.46px;font-size:30.99px;line-height:30.99px;color:#1b1c1e;font-weight:700;-webkit-text-stroke:0.2px #1b1c1e;transform:scaleX(0.9760);">16</div>
<div class="t" style="left:644.41px;top:885.07px;font-size:24.04px;line-height:24.04px;color:#1b1c1e;-webkit-text-stroke:0.35px #1b1c1e;transform:scaleX(0.9839);">Total</div>
<div class="t" style="left:735.88px;top:879.46px;font-size:30.99px;line-height:30.99px;color:#1b1c1e;font-weight:700;-webkit-text-stroke:0.2px #1b1c1e;transform:scaleX(0.9324);">1</div>
<div class="t" style="left:759.01px;top:885.07px;font-size:24.04px;line-height:24.04px;color:#1b1c1e;-webkit-text-stroke:0.35px #1b1c1e;transform:scaleX(0.9536);">Incomplete</div>
<div class="t" style="left:915.05px;top:879.46px;font-size:30.99px;line-height:30.99px;color:#1b1c1e;font-weight:700;-webkit-text-stroke:0.2px #1b1c1e;transform:scaleX(0.8942);">15</div>
<div class="t" style="left:953.65px;top:885.07px;font-size:24.04px;line-height:24.04px;color:#1b1c1e;-webkit-text-stroke:0.35px #1b1c1e;transform:scaleX(0.9312);">Completed</div>
<div class="t" style="left:1559.80px;top:324.07px;font-size:33.57px;line-height:33.57px;color:#1b1c1e;font-weight:700;-webkit-text-stroke:0.2px #1b1c1e;transform:scaleX(0.8602);">Spam reports</div>
<div class="t" style="left:1802.77px;top:330.51px;font-size:25.16px;line-height:25.16px;color:#5e636b;-webkit-text-stroke:0.35px #5e636b;transform:scaleX(0.9674);">(Includes group data)</div>
<div class="t" style="left:1559.32px;top:449.25px;font-size:21.7px;line-height:21.7px;color:#5d5d5d;-webkit-text-stroke:0.12px #5d5d5d;transform:scaleX(1.0312);">20</div>
<div class="t" style="left:1558.29px;top:531.65px;font-size:21.7px;line-height:21.7px;color:#5d5d5d;-webkit-text-stroke:0.12px #5d5d5d;transform:scaleX(1.0847);">15</div>
<div class="t" style="left:1558.36px;top:614.35px;font-size:21.7px;line-height:21.7px;color:#5d5d5d;-webkit-text-stroke:0.12px #5d5d5d;transform:scaleX(1.0791);">10</div>
<div class="t" style="left:1571.85px;top:697.05px;font-size:21.7px;line-height:21.7px;color:#5d5d5d;-webkit-text-stroke:0.12px #5d5d5d;transform:scaleX(1.0845);">5</div>
<div class="t" style="left:1571.25px;top:779.45px;font-size:21.7px;line-height:21.7px;color:#5d5d5d;-webkit-text-stroke:0.12px #5d5d5d;transform:scaleX(1.0855);">0</div>
<div class="t" style="left:1592.35px;top:806.18px;font-size:23.9px;line-height:23.9px;color:#5d5d5d;-webkit-text-stroke:0.12px #5d5d5d;transform:scaleX(1.0847);">8/18/25</div>
<div class="t" style="left:1781.76px;top:806.18px;font-size:23.9px;line-height:23.9px;color:#5d5d5d;-webkit-text-stroke:0.12px #5d5d5d;transform:scaleX(1.0847);">8/19/25</div>
<div class="t" style="left:1970.31px;top:806.18px;font-size:23.9px;line-height:23.9px;color:#5d5d5d;-webkit-text-stroke:0.12px #5d5d5d;transform:scaleX(1.0847);">8/20/25</div>
<div class="t" style="left:2160.35px;top:806.18px;font-size:23.9px;line-height:23.9px;color:#5d5d5d;-webkit-text-stroke:0.12px #5d5d5d;transform:scaleX(1.0847);">8/21/25</div>
<div class="t" style="left:2349.76px;top:806.18px;font-size:23.9px;line-height:23.9px;color:#5d5d5d;-webkit-text-stroke:0.12px #5d5d5d;transform:scaleX(1.0847);">8/22/25</div>
<div class="t" style="left:2539.35px;top:806.18px;font-size:23.9px;line-height:23.9px;color:#5d5d5d;-webkit-text-stroke:0.12px #5d5d5d;transform:scaleX(1.0847);">8/23/25</div>
<div class="t" style="left:2728.21px;top:806.18px;font-size:23.9px;line-height:23.9px;color:#5d5d5d;-webkit-text-stroke:0.12px #5d5d5d;transform:scaleX(1.0847);">8/24/25</div>
<div class="t" style="left:1982.04px;top:880.58px;font-size:30.85px;line-height:30.85px;color:#1b1c1e;font-weight:700;-webkit-text-stroke:0.2px #1b1c1e;transform:scaleX(0.9512);">101</div>
<div class="t" style="left:2037.93px;top:885.18px;font-size:23.9px;line-height:23.9px;color:#1b1c1e;-webkit-text-stroke:0.35px #1b1c1e;transform:scaleX(0.9550);">Incoming emails</div>
<div class="t" style="left:2281.86px;top:880.79px;font-size:30.85px;line-height:30.85px;color:#1b1c1e;font-weight:700;-webkit-text-stroke:0.2px #1b1c1e;transform:scaleX(0.9533);">7</div>
<div class="t" style="left:2303.42px;top:885.12px;font-size:23.9px;line-height:23.9px;color:#1b1c1e;-webkit-text-stroke:0.35px #1b1c1e;transform:scaleX(0.9405);">Incoming spam</div>
<div class="t" style="left:191.72px;top:997.14px;font-size:33.72px;line-height:33.72px;color:#1b1c1e;font-weight:700;-webkit-text-stroke:0.2px #1b1c1e;transform:scaleX(0.8603);">Rejection type reports</div>
<div class="t" style="left:192.60px;top:1089.15px;font-size:21.7px;line-height:21.7px;color:#5d5d5d;-webkit-text-stroke:0.12px #5d5d5d;">1</div>
<div class="t" style="left:191.58px;top:1451.45px;font-size:21.7px;line-height:21.7px;color:#5d5d5d;-webkit-text-stroke:0.12px #5d5d5d;transform:scaleX(1.0318);">0</div>
<div class="t" style="left:212.82px;top:1478.68px;font-size:23.9px;line-height:23.9px;color:#5d5d5d;-webkit-text-stroke:0.12px #5d5d5d;transform:scaleX(1.0847);">8/18/25</div>
<div class="t" style="left:403.82px;top:1478.68px;font-size:23.9px;line-height:23.9px;color:#5d5d5d;-webkit-text-stroke:0.12px #5d5d5d;transform:scaleX(1.0847);">8/19/25</div>
<div class="t" style="left:594.82px;top:1478.68px;font-size:23.9px;line-height:23.9px;color:#5d5d5d;-webkit-text-stroke:0.12px #5d5d5d;transform:scaleX(1.0847);">8/20/25</div>
<div class="t" style="left:785.82px;top:1478.68px;font-size:23.9px;line-height:23.9px;color:#5d5d5d;-webkit-text-stroke:0.12px #5d5d5d;transform:scaleX(1.0847);">8/21/25</div>
<div class="t" style="left:976.82px;top:1478.68px;font-size:23.9px;line-height:23.9px;color:#5d5d5d;-webkit-text-stroke:0.12px #5d5d5d;transform:scaleX(1.0847);">8/22/25</div>
<div class="t" style="left:1167.82px;top:1478.68px;font-size:23.9px;line-height:23.9px;color:#5d5d5d;-webkit-text-stroke:0.12px #5d5d5d;transform:scaleX(1.0847);">8/23/25</div>
<div class="t" style="left:1358.82px;top:1478.68px;font-size:23.9px;line-height:23.9px;color:#5d5d5d;-webkit-text-stroke:0.12px #5d5d5d;transform:scaleX(1.0847);">8/24/25</div>
<div class="t" style="left:1558.70px;top:997.72px;font-size:32.57px;line-height:32.57px;color:#1b1c1e;font-weight:700;-webkit-text-stroke:0.2px #1b1c1e;transform:scaleX(0.8823);">Bounce reports</div>
<div class="t" style="left:1559.90px;top:1089.15px;font-size:21.7px;line-height:21.7px;color:#5d5d5d;-webkit-text-stroke:0.12px #5d5d5d;">1</div>
<div class="t" style="left:1559.48px;top:1451.45px;font-size:21.7px;line-height:21.7px;color:#5d5d5d;-webkit-text-stroke:0.12px #5d5d5d;transform:scaleX(1.0318);">0</div>
<div class="t" style="left:1580.82px;top:1478.68px;font-size:23.9px;line-height:23.9px;color:#5d5d5d;-webkit-text-stroke:0.12px #5d5d5d;transform:scaleX(1.0847);">8/18/25</div>
<div class="t" style="left:1771.36px;top:1478.68px;font-size:23.9px;line-height:23.9px;color:#5d5d5d;-webkit-text-stroke:0.12px #5d5d5d;transform:scaleX(1.0847);">8/19/25</div>
<div class="t" style="left:1963.35px;top:1478.68px;font-size:23.9px;line-height:23.9px;color:#5d5d5d;-webkit-text-stroke:0.12px #5d5d5d;transform:scaleX(1.0847);">8/20/25</div>
<div class="t" style="left:2154.60px;top:1478.68px;font-size:23.9px;line-height:23.9px;color:#5d5d5d;-webkit-text-stroke:0.12px #5d5d5d;transform:scaleX(1.0847);">8/21/25</div>
<div class="t" style="left:2345.82px;top:1478.68px;font-size:23.9px;line-height:23.9px;color:#5d5d5d;-webkit-text-stroke:0.12px #5d5d5d;transform:scaleX(1.0847);">8/22/25</div>
<div class="t" style="left:2536.36px;top:1478.68px;font-size:23.9px;line-height:23.9px;color:#5d5d5d;-webkit-text-stroke:0.12px #5d5d5d;transform:scaleX(1.0847);">8/23/25</div>
<div class="t" style="left:2728.35px;top:1478.68px;font-size:23.9px;line-height:23.9px;color:#5d5d5d;-webkit-text-stroke:0.12px #5d5d5d;transform:scaleX(1.0847);">8/24/25</div>
<div class="t" style="left:26.50px;top:135.02px;font-size:21.51px;line-height:21.51px;color:#1b1c1e;-webkit-text-stroke:0.35px #1b1c1e;transform:scaleX(0.9765);">Dashboard</div>
<div class="t" style="left:33.31px;top:235.22px;font-size:21.51px;line-height:21.51px;color:#1b1c1e;-webkit-text-stroke:0.35px #1b1c1e;transform:scaleX(0.9958);">Favorites</div>
<div class="t" style="left:50.69px;top:335.42px;font-size:21.51px;line-height:21.51px;color:#1b1c1e;-webkit-text-stroke:0.35px #1b1c1e;transform:scaleX(0.9430);">Users</div>
<div class="t" style="left:38.40px;top:435.42px;font-size:21.51px;line-height:21.51px;color:#1b1c1e;-webkit-text-stroke:0.35px #1b1c1e;transform:scaleX(1.0512);">Mailbox</div>
<div class="t" style="left:24.68px;top:534.12px;font-size:21.51px;line-height:21.51px;color:#1b1c1e;-webkit-text-stroke:0.35px #1b1c1e;transform:scaleX(1.0098);">Email stats</div>
<div class="t" style="left:43.51px;top:634.02px;font-size:21.51px;line-height:21.51px;color:#1b1c1e;-webkit-text-stroke:0.35px #1b1c1e;transform:scaleX(0.9517);">Groups</div>
<div class="t" style="left:55.41px;top:734.12px;font-size:21.51px;line-height:21.51px;color:#1b1c1e;-webkit-text-stroke:0.35px #1b1c1e;transform:scaleX(0.9389);">Logs</div>
<div class="t" style="left:20.74px;top:834.12px;font-size:21.51px;line-height:21.51px;color:#1b1c1e;-webkit-text-stroke:0.35px #1b1c1e;transform:scaleX(0.9883);">Compliance</div>
<div class="t" style="left:38.76px;top:933.02px;font-size:21.51px;line-height:21.51px;color:#1b1c1e;-webkit-text-stroke:0.35px #1b1c1e;transform:scaleX(0.9817);">Security</div>
<div class="t" style="left:13.57px;top:1033.02px;font-size:21.51px;line-height:21.51px;color:#1b1c1e;-webkit-text-stroke:0.35px #1b1c1e;transform:scaleX(1.0165);">Collaborative</div>
<div class="t" style="left:55.04px;top:1061.22px;font-size:21.51px;line-height:21.51px;color:#1b1c1e;-webkit-text-stroke:0.35px #1b1c1e;transform:scaleX(0.9730);">apps</div>
<div class="t" style="left:14.87px;top:1161.42px;font-size:21.51px;line-height:21.51px;color:#1b1c1e;-webkit-text-stroke:0.35px #1b1c1e;transform:scaleX(1.0247);">Organization</div>
<div class="t" style="left:19.72px;top:1524.33px;font-size:19.26px;line-height:19.26px;color:#1b1c1e;-webkit-text-stroke:0.35px #1b1c1e;transform:scaleX(1.0123);">Configuration</div>
<div class="b" style="left:465.6px;top:1556.6px;width:17.7px;height:1.6px;background:#84b09a;border-radius:1px"></div><div class="b" style="left:504.7px;top:1556.6px;width:6.3px;height:1.6px;background:#1b1c1e;border-radius:1px"></div><div class="b" style="left:782.8px;top:1556.6px;width:18.2px;height:1.6px;background:#f2ca8c;border-radius:1px"></div><div class="b" style="left:822.4px;top:1556.6px;width:6.6px;height:1.6px;background:#1b1c1e;border-radius:1px"></div><div class="b" style="left:936.3px;top:1556.6px;width:17.5px;height:1.6px;background:#85a6ea;border-radius:1px"></div><div class="b" style="left:977px;top:1556.6px;width:4.5px;height:1.6px;background:#1b1c1e;border-radius:1px"></div><div class="b" style="left:1106px;top:1556.6px;width:19.4px;height:1.6px;background:#f5ae9d;border-radius:1px"></div><div class="b" style="left:1146.5px;top:1556.6px;width:6.5px;height:1.6px;background:#1b1c1e;border-radius:1px"></div><div class="b" style="left:1972.4px;top:1556.6px;width:18.9px;height:1.6px;background:#84b09a;border-radius:1px"></div><div class="b" style="left:2014.5px;top:1556.6px;width:3.5px;height:1.6px;background:#1b1c1e;border-radius:1px"></div><div class="b" style="left:2239.4px;top:1556.6px;width:18.9px;height:1.6px;background:#f2ca8c;border-radius:1px"></div><div class="b" style="left:2279px;top:1556.6px;width:6.0px;height:1.6px;background:#1b1c1e;border-radius:1px"></div><div class="b" style="left:6px;top:1546px;width:2870px;height:12px;background:linear-gradient(rgba(0,0,0,0),rgba(0,0,0,0.035))"></div>
<svg width="2882" height="1564" viewBox="0 0 2882 1564"><defs><filter id="sh2" x="-50%" y="-50%" width="200%" height="200%"><feDropShadow dx="0" dy="5" stdDeviation="6" flood-color="#000" flood-opacity="0.22"/></filter></defs><circle cx="2814" cy="1490" r="36" fill="#2e64dc" filter="url(#sh2)"/>
<g stroke="#fff" stroke-width="3" fill="none" stroke-linecap="round">
 <path d="M2797.5 1479.8H2811.8M2820.6 1479.8H2828.3M2797.5 1489.2H2828.3M2797.5 1498.8H2801.5M2810.4 1498.8H2828.3"/>
 <circle cx="2816.2" cy="1479.8" r="4"/><circle cx="2806" cy="1498.8" r="4"/>
</g></svg>
<div class="ann" style="left:14px;top:76px;width:128px;height:88px"></div>
<div class="ann" style="left:684px;top:100px;width:198px;height:84px"></div>
<div class="ann" style="left:2240px;top:84px;width:66px;height:66px"></div>
<div class="ann" style="left:2434px;top:80px;width:416px;height:74px"></div>
<div class="ann" style="left:2764px;top:1434px;width:100px;height:108px"></div>
<div class="b" style="left:0;top:0;width:2882px;height:6px;background:#d6dee5"></div>
<div class="b" style="left:0;top:0;width:6px;height:1564px;background:#d6dee5"></div>
<div class="b" style="left:2876px;top:0;width:6px;height:1564px;background:#d6dee5"></div>
<div class="b" style="left:0;top:1558px;width:2882px;height:6px;background:#d6dee5"></div>
</body></html>
